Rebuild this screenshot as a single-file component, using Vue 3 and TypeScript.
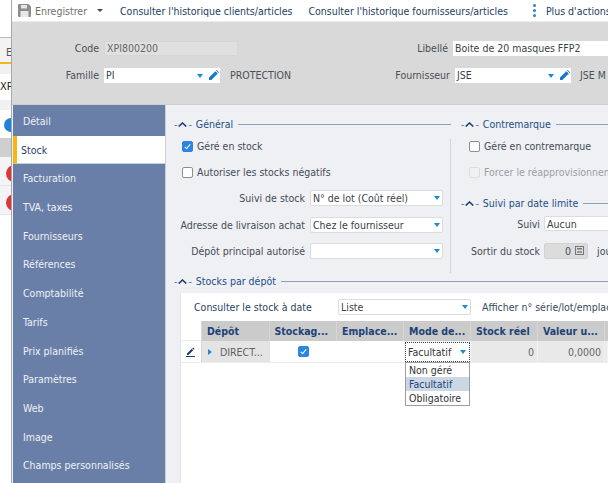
<script setup lang="ts">
const navItems = ['Détail', 'Stock', 'Facturation', 'TVA, taxes', 'Fournisseurs', 'Références', 'Comptabilité', 'Tarifs', 'Prix planifiés', 'Paramètres', 'Web', 'Image', 'Champs personnalisés']
const columns = ['Dépôt', 'Stockag...', 'Emplace...', 'Mode de...', 'Stock réel', 'Valeur u...']
const modes = ['Non géré', 'Facultatif', 'Obligatoire']
</script>

<template>
  <div class="page">
    <!-- bit of the window behind -->
    <div class="behind">
      <div class="b-white"></div>
      <div class="b-tab"><span>E</span></div>
      <div class="b-gap"></div>
      <div class="b-code">XP</div>
      <div class="b-gap"></div>
      <div class="b-plus"><span class="b-blue"></span></div>
      <div class="b-grey"></div>
      <div class="b-row"><span class="b-red"></span></div>
      <div class="b-row"><span class="b-red"></span></div>
      <div class="b-rest"></div>
    </div>

    <div class="window">
      <div class="toolbar">
        <svg class="save" width="13" height="13" viewBox="0 0 13 13">
          <path fill="#8c8c8c" d="M0 1a1 1 0 0 1 1-1h9.5L13 2.5V12a1 1 0 0 1-1 1H1a1 1 0 0 1-1-1z" />
          <rect x="3" y="1" width="6" height="3.5" fill="#e8e8e8" />
          <rect x="2.5" y="7" width="8" height="6" fill="#e8e8e8" />
        </svg>
        <span class="save-label">Enregistrer</span>
        <span class="tb-caret"></span>
        <span class="tb-link first">Consulter l'historique clients/articles</span>
        <span class="tb-link second">Consulter l'historique fournisseurs/articles</span>
        <span class="dots"><i></i><i></i><i></i></span>
        <span class="tb-link">Plus d'actions</span>
      </div>

      <div class="head">
        <div class="head-row">
          <label class="lbl code-lbl">Code</label>
          <div class="inp disabled">XPI800200</div>
          <label class="lbl libelle-lbl">Libellé</label>
          <div class="inp libelle-inp">Boite de 20 masques FFP2</div>
        </div>
        <div class="head-row second-row">
          <label class="lbl code-lbl">Famille</label>
          <div class="inp code-inp combo">
            PI
            <span class="caret"></span>
            <svg class="pen" width="10" height="10" viewBox="0 0 10 10"><path fill="#1976d2" d="M0 10V7.6L6.4 1.2l2.4 2.4L2.4 10zM7.1.5l.6-.5 2.3 2.3-.5.6z" /></svg>
          </div>
          <span class="head-desc prot">PROTECTION</span>
          <label class="lbl four-lbl">Fournisseur</label>
          <div class="inp code-inp combo">
            JSE
            <span class="caret"></span>
            <svg class="pen" width="10" height="10" viewBox="0 0 10 10"><path fill="#1976d2" d="M0 10V7.6L6.4 1.2l2.4 2.4L2.4 10zM7.1.5l.6-.5 2.3 2.3-.5.6z" /></svg>
          </div>
          <span class="head-desc">JSE M</span>
        </div>
      </div>

      <div class="body">
        <nav class="nav">
          <div v-for="item in navItems" :key="item" class="nav-item" :class="{ active: item === 'Stock' }">{{ item }}</div>
        </nav>

        <div class="content">
          <div class="top">
            <section class="general">
              <div class="sec-title">
                <span class="chev">-<svg width="9" height="5" viewBox="0 0 9 5"><path d="M.7 4.5l3.8-3.5 3.8 3.5" fill="none" stroke="#1d3f73" stroke-width="1.6" /></svg>-</span>
                <span>Général</span><span class="line"></span>
              </div>
              <div class="gen-body">
                <div class="check-row first-check"><span class="cb on"></span>Géré en stock</div>
                <div class="check-row second-check"><span class="cb"></span>Autoriser les stocks négatifs</div>
                <div class="field"><label>Suivi de stock</label><div class="sel">N° de lot (Coût réel)<span class="caret"></span></div></div>
                <div class="field"><label>Adresse de livraison achat</label><div class="sel">Chez le fournisseur<span class="caret"></span></div></div>
                <div class="field"><label>Dépôt principal autorisé</label><div class="sel"><span class="caret"></span></div></div>
              </div>
            </section>

            <section class="side">
              <div class="sec-title">
                <span class="chev">-<svg width="9" height="5" viewBox="0 0 9 5"><path d="M.7 4.5l3.8-3.5 3.8 3.5" fill="none" stroke="#1d3f73" stroke-width="1.6" /></svg>-</span>
                <span>Contremarque</span><span class="line"></span>
              </div>
              <div class="check-row first-check side-check"><span class="cb"></span>Géré en contremarque</div>
              <div class="check-row second-check side-check faded"><span class="cb"></span>Forcer le réapprovisionnement</div>
              <div class="sec-title limit">
                <span class="chev">-<svg width="9" height="5" viewBox="0 0 9 5"><path d="M.7 4.5l3.8-3.5 3.8 3.5" fill="none" stroke="#1d3f73" stroke-width="1.6" /></svg>-</span>
                <span>Suivi par date limite</span><span class="line"></span>
              </div>
              <div class="limit-row suivi-row"><label>Suivi</label><div class="sel aucun">Aucun</div></div>
              <div class="limit-row sortir-row">
                <label>Sortir du stock</label>
                <div class="num">0
                  <svg width="9" height="9" viewBox="0 0 9 9"><rect x=".5" y=".5" width="8" height="8" fill="none" stroke="#777" /><rect x="2" y="2" width="5" height="1.5" fill="#777" /><rect x="2" y="5" width="5" height="2" fill="#999" /></svg>
                </div>
                <span class="jours">jours</span>
              </div>
            </section>
          </div>

          <section class="stocks">
            <div class="sec-title">
              <span class="chev">-<svg width="9" height="5" viewBox="0 0 9 5"><path d="M.7 4.5l3.8-3.5 3.8 3.5" fill="none" stroke="#1d3f73" stroke-width="1.6" /></svg>-</span>
              <span>Stocks par dépôt</span><span class="line"></span>
            </div>
            <div class="panel">
              <div class="panel-bar">
                <span class="consult">Consulter le stock à date</span>
                <div class="sel liste">Liste<span class="caret"></span></div>
                <span class="afficher">Afficher n° série/lot/emplacement</span>
              </div>
              <div class="grid">
                <div class="cell corner"></div>
                <div v-for="col in columns" :key="col" class="cell hd">{{ col }}</div>
                <div class="cell hd filler"></div>

                <div class="cell corner edit">
                  <svg width="10" height="10" viewBox="0 0 10 10"><path fill="#1d3f73" d="M1 6.5L5.7 1.8l1.5 1.5L2.5 8H1zM6.2 1.3l.9-.9 1.5 1.5-.9.9zM0 9h9v1H0z" /></svg>
                </div>
                <div class="cell depot"><span class="tri"></span>DIRECT...</div>
                <div class="cell center"><span class="cb on"></span></div>
                <div class="cell"></div>
                <div class="cell mode">
                  <div class="mode-box">Facultatif<span class="caret"></span></div>
                  <ul class="dropdown">
                    <li v-for="m in modes" :key="m" :class="{ picked: m === 'Facultatif' }">{{ m }}</li>
                  </ul>
                </div>
                <div class="cell grey right">0</div>
                <div class="cell grey right">0,0000</div>
                <div class="cell grey"></div>
              </div>
            </div>
          </section>
        </div>
      </div>
    </div>
  </div>
</template>

<style>
html, body { margin: 0; overflow: hidden; }
</style>

<style scoped>
.page {
  display: flex;
  width: 608px;
  height: 483px;
  overflow: hidden;
  background: #fff;
  font-family: "DejaVu Sans Condensed", "DejaVu Sans", sans-serif;
  font-stretch: condensed;
  font-size: 10.5px;
  color: #444c56;
}

/* behind */
.behind { width: 11px; flex: none; display: flex; flex-direction: column; background: #fff; overflow: hidden; }
.b-white { height: 37px; background: #fff; border-bottom: 1px solid #bbb; }
.b-tab { height: 26px; background: #f3f3f3; border-bottom: 2px solid #f5b51e; color: #555; text-align: right; line-height: 28px; overflow: hidden; box-sizing: border-box; }
.b-tab span { margin-right: -1px; }
.b-gap { height: 10px; background: #f1f1f1; }
.b-code { height: 26px; background: #fff; line-height: 26px; color: #222; font-size: 11px; overflow: hidden; }
.b-plus { height: 28px; background: #fff; position: relative; overflow: hidden; }
.b-blue { position: absolute; left: 4px; top: 8px; width: 14px; height: 14px; border-radius: 50%; background: #1e82d8; }
.b-grey { height: 19px; background: #cfcfcf; }
.b-row { height: 29px; background: #f4f4f6; position: relative; overflow: hidden; border-bottom: 1px solid #e6e6e6; box-sizing: border-box; }
.b-red { position: absolute; left: 6px; top: 8px; width: 17px; height: 17px; border-radius: 50%; background: #e03636; }
.b-rest { flex: 1; background: #fff; }

.window { flex: 1; min-width: 0; display: flex; flex-direction: column; border-left: 1px solid #a8a8a8; }

.toolbar { height: 21px; flex: none; display: flex; align-items: center; background: #fff; border-bottom: 1px solid #ececec; white-space: nowrap; padding-left: 6px; overflow: hidden; }
.toolbar > * { flex: none; }
.save-label { margin-left: 4px; color: #707070; }
.tb-caret { width: 0; height: 0; border: 3px solid transparent; border-top: 3px solid #2c4a72; border-bottom: 0; margin-left: 10px; }
.tb-link { color: #24405f; }
.tb-link.first { margin-left: 17px; }
.tb-link.second { margin-left: 16px; }
.dots { display: flex; flex-direction: column; gap: 2px; margin: 0 10px 0 25px; }
.dots i { width: 3px; height: 3px; border-radius: 50%; background: #1e88d9; }

.head { height: 83px; flex: none; background: #d9d9d9; border-bottom: 1px solid #cfcfd3; box-sizing: border-box; padding-top: 18px; }
.head-row { display: flex; align-items: center; height: 16px; white-space: nowrap; }
.second-row { margin-top: 11px; }
.lbl { color: #4a4f57; text-align: right; flex: none; }
.code-lbl { width: 87px; }
.libelle-lbl { width: 210px; }
.four-lbl { width: 120px; }
.inp { height: 15px; line-height: 15px; margin-left: 5px; background: #fff; padding-left: 2px; box-sizing: border-box; color: #3a3f48; position: relative; flex: none; }
.code-inp { width: 116px; }
.disabled { width: 134px; background: #e0e0e0; border: 1px solid #d6d6d6; color: #666; line-height: 13px; }
.libelle-inp { flex: 1; }
.head-desc { margin-left: 9px; color: #4a4f57; flex: none; }
.prot { width: 100px; margin-left: 10px; }
.caret { position: absolute; right: 17px; top: 6px; width: 0; height: 0; border: 3.5px solid transparent; border-top: 4px solid #1e88d9; border-bottom: 0; }
.pen { position: absolute; right: 1px; top: 2px; }

.body { flex: 1; min-height: 0; display: flex; background: #eff0f4; }
.nav { width: 153px; flex: none; margin-left: 1px; background: #6a7fa8; padding-top: 2px; box-sizing: border-box; border-right: 1px solid #c9cfdd; }
.nav-item { height: 28.7px; line-height: 28px; padding-left: 10px; color: #eef1f6; box-sizing: border-box; }
.nav-item.active { background: #fff; color: #1f3f6e; border-left: 4px solid #f7b614; padding-left: 4px; border-bottom: 1px solid #c8cfdd; }

.content { flex: 1; min-width: 0; display: flex; flex-direction: column; overflow: hidden; padding-left: 8px; }
.top { display: flex; height: 169px; flex: none; }
.general { width: 277px; flex: none; padding-top: 12px; box-sizing: border-box; }
.side { flex: 1; min-width: 0; margin-left: 10px; padding-top: 12px; white-space: nowrap; overflow: hidden; }

.sec-title { display: flex; align-items: center; height: 14px; color: #1d4f86; white-space: nowrap; gap: 4px; }
.chev { display: inline-flex; align-items: center; gap: 1px; color: #5a7196; }
.line { flex: 1; height: 1px; background: #8ea0bd; margin-left: 1px; }
.limit { margin-top: 17px; }

.gen-body { border-right: 1px solid #d2d4da; height: 134px; }
.check-row { display: flex; align-items: center; height: 14px; padding-left: 8px; gap: 4px; white-space: nowrap; }
.first-check { margin-top: 8px; }
.second-check { margin-top: 12px; margin-bottom: 11px; }
.side-check { padding-left: 8px; }
.faded { color: #9b9ea5; }
.faded .cb { border-color: #ddd; background: #f1f1f1; }
.cb { width: 9px; height: 9px; border: 1px solid #8f8f8f; border-radius: 2px; background: #fff; display: inline-block; position: relative; flex: none; }
.cb.on { background: #2a86de; border-color: #2a86de; }
.cb.on::after { content: ""; position: absolute; left: 3px; top: 1px; width: 2px; height: 5px; border: solid #fff; border-width: 0 1.4px 1.4px 0; transform: rotate(40deg); }

.field { display: flex; align-items: center; justify-content: flex-end; height: 16px; margin-bottom: 10.5px; padding-right: 7px; white-space: nowrap; }
.field label { margin-right: 5px; }
.sel { width: 133px; height: 16px; line-height: 14px; background: #fff; border: 1px solid #dcdce0; border-radius: 2px; padding-left: 2px; box-sizing: border-box; position: relative; color: #3a3f48; flex: none; }
.sel .caret { right: 2px; top: 5px; }

.limit-row { display: flex; align-items: center; }
.limit-row label { width: 79px; text-align: right; margin-right: 4px; flex: none; }
.suivi-row { margin-top: 6px; height: 15px; }
.aucun { width: 120px; height: 15px; }
.sortir-row { margin-top: 11px; height: 17px; }
.num { width: 44px; height: 16px; box-sizing: border-box; background: #dcdcdc; border: 1px solid #d2d2d2; border-radius: 2px; display: flex; align-items: center; justify-content: flex-end; gap: 4px; padding-right: 3px; flex: none; }
.jours { margin-left: 9px; }

.stocks { flex: 1; min-height: 0; }
.panel { margin-left: 6px; margin-top: 5px; background: #fff; height: 190px; border-left: 1px solid #e4e4e4; box-sizing: border-box; }
.panel-bar { height: 28px; display: flex; align-items: center; white-space: nowrap; padding-left: 13px; }
.consult { width: 144px; color: #2b435f; flex: none; }
.liste { width: 133px; margin-right: 11px; }
.afficher { color: #3a4a5c; }

.grid { display: grid; grid-template-columns: 21px 67.5px 67.5px 67px 67px 67px 67px 1fr; grid-template-rows: 20px 22px; }
.cell { display: flex; align-items: center; min-width: 0; white-space: nowrap; border-bottom: 1px solid #ececec; box-sizing: border-box; position: relative; }
.corner { background: #fff; border-right: 1px solid #d8d8d8; justify-content: center; }
.hd { background: #cbcbcb; color: #1d4376; font-weight: 700; padding-left: 5px; border-bottom: 0; border-right: 1px solid #d6d6d6; }
.filler { padding: 0; border-right: 0; }
.depot { background: #e4e4e4; padding-left: 6px; color: #5b5f66; gap: 8px; }
.tri { width: 0; height: 0; border: 3px solid transparent; border-left: 4px solid #1e88d9; border-right: 0; }
.center { justify-content: center; }
.mode { background: #f4f4f4; padding-left: 1px; overflow: visible; }
.mode-box { width: 65px; height: 20px; line-height: 18px; background: #fff; border: 1px dotted #33455f; padding-left: 2px; box-sizing: border-box; position: relative; color: #333; }
.mode-box .caret { right: 3px; top: 7px; }
.grey { background: #e9e9e9; border-right: 1px solid #f3f3f3; }
.right { justify-content: flex-end; padding-right: 3px; color: #666; }
.dropdown { position: absolute; left: 1px; top: 21px; width: 65px; margin: 0; padding: 0; list-style: none; background: #fff; border: 1px solid #9c9c9c; box-sizing: border-box; z-index: 2; }
.dropdown li { height: 14px; line-height: 14px; padding-left: 3px; color: #333; }
.dropdown li.picked { background: #ccd7e6; color: #1d4376; }
</style>
